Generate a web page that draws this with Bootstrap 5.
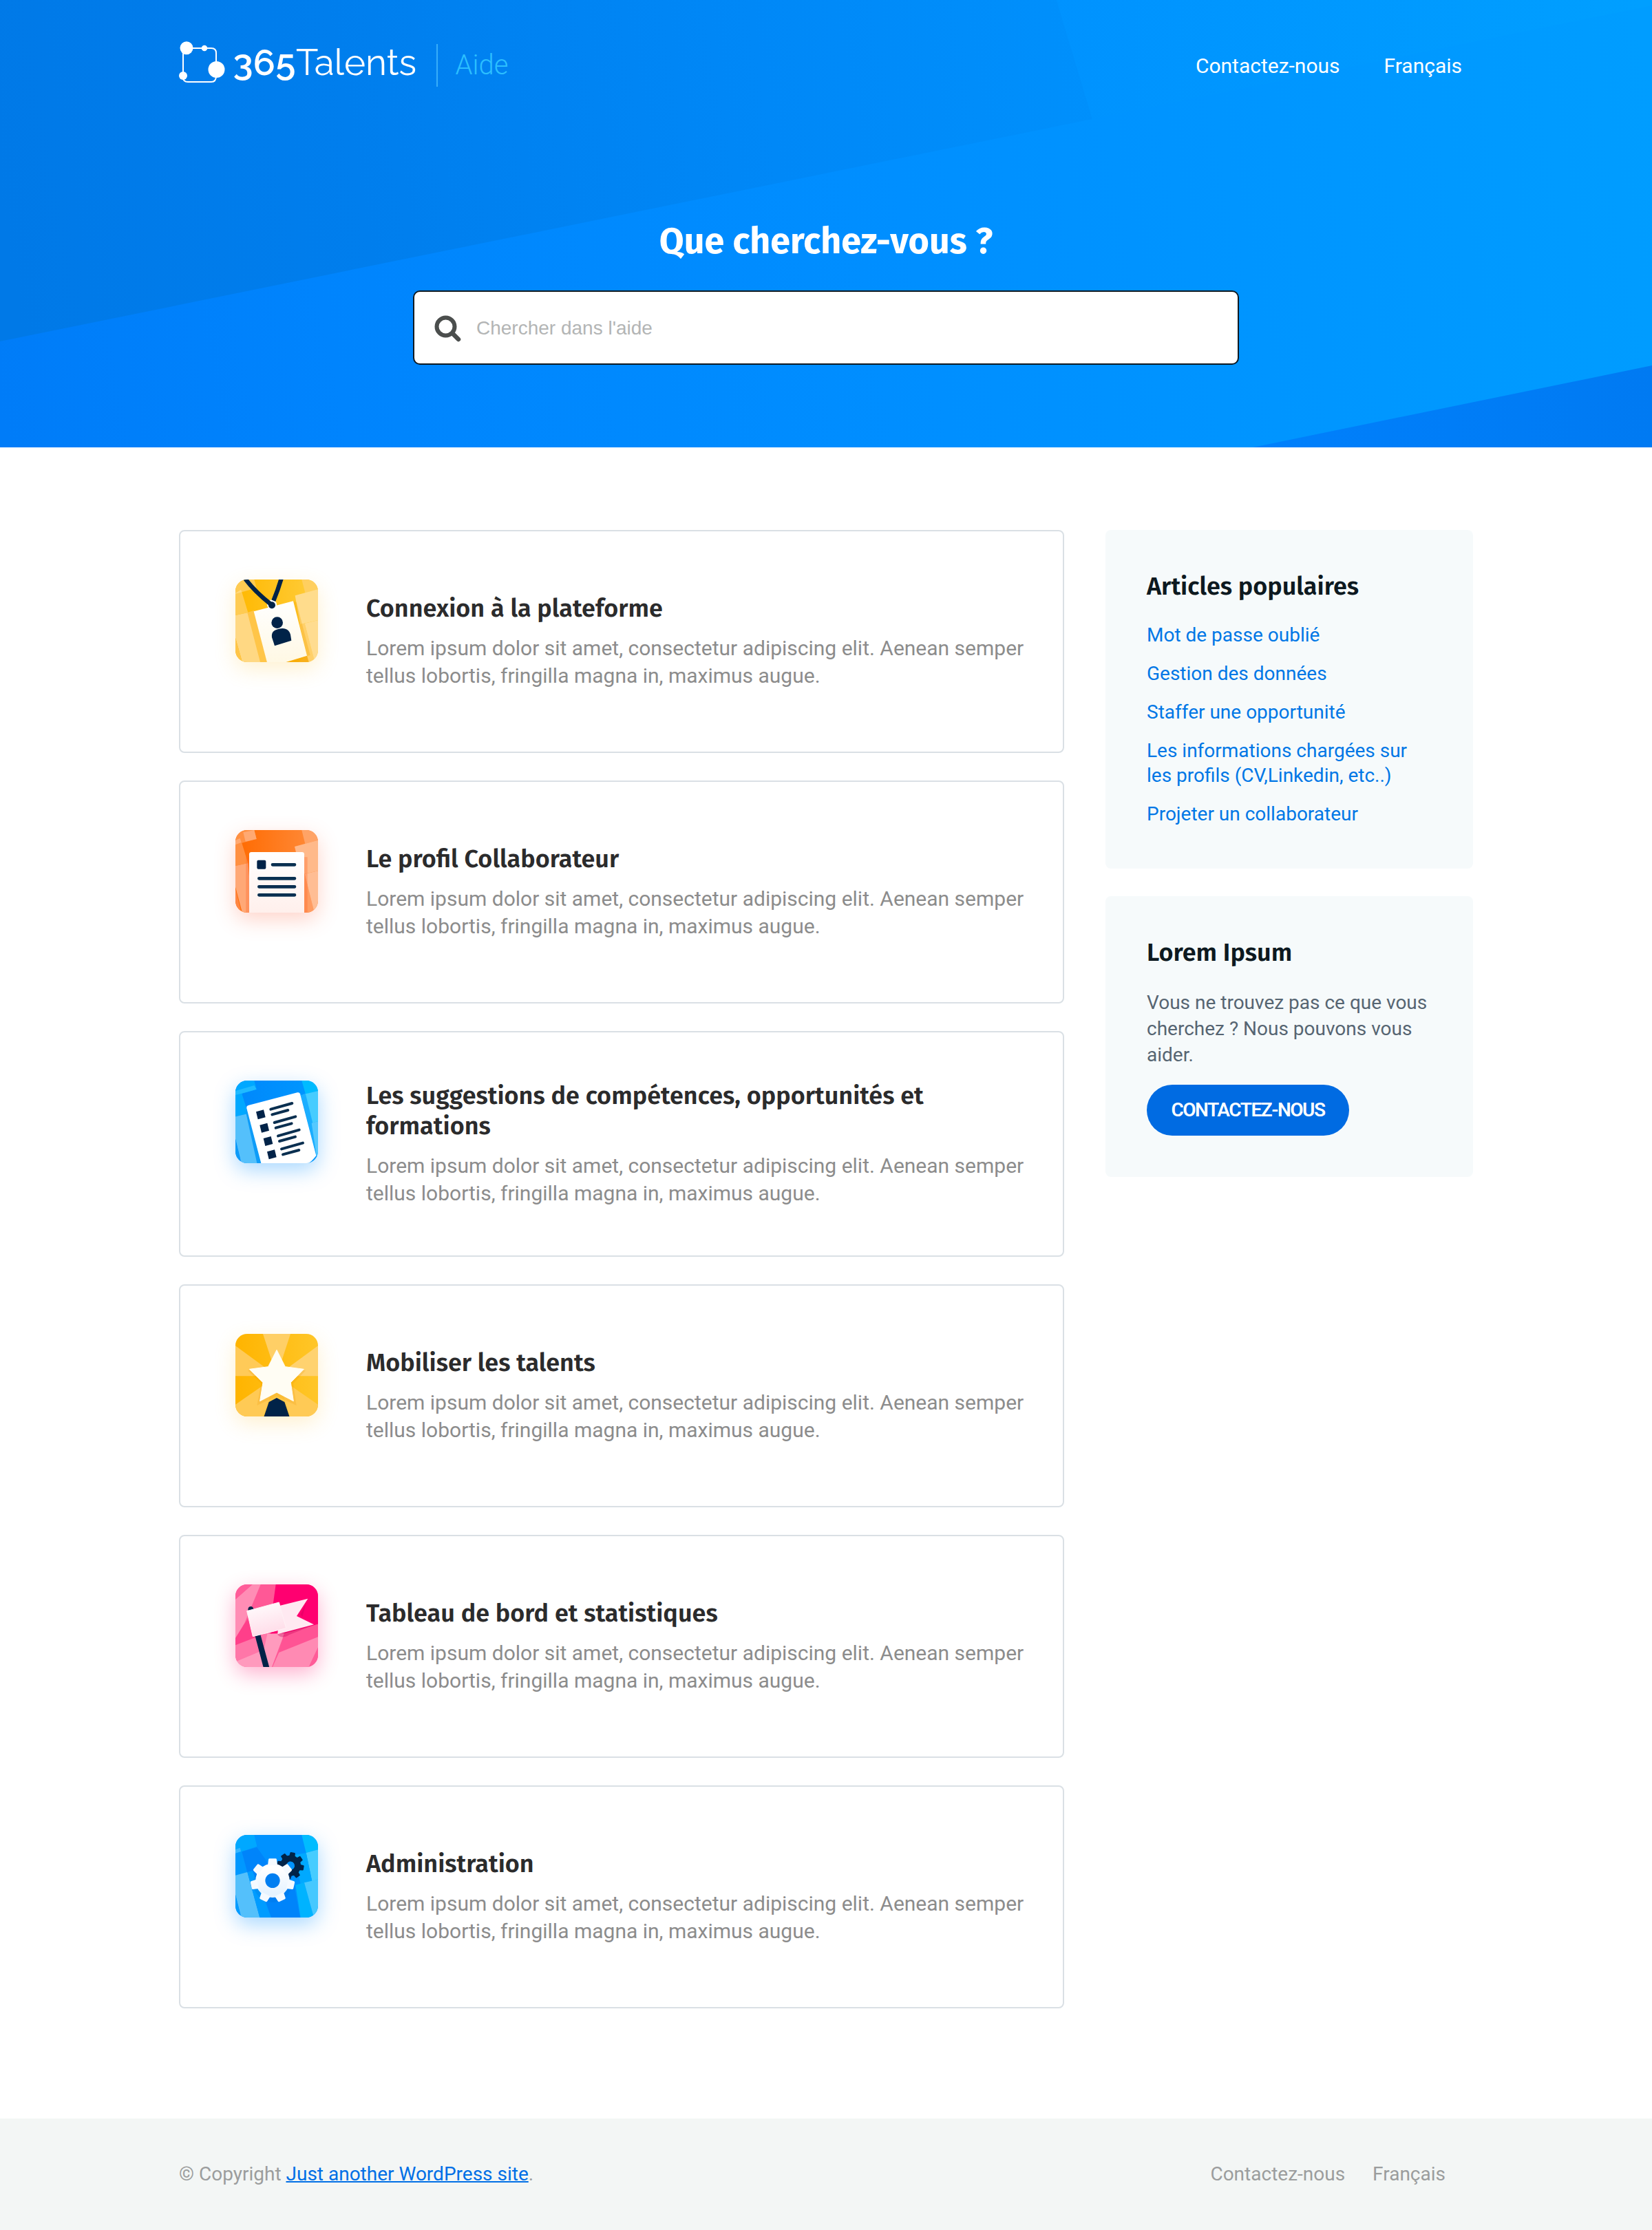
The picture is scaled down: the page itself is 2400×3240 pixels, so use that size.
<!DOCTYPE html>
<html lang="fr">
<head>
<meta charset="utf-8">
<meta name="viewport" content="width=device-width, initial-scale=1">
<title>365Talents Aide</title>
<link href="https://cdn.jsdelivr.net/npm/bootstrap@5.3.0/dist/css/bootstrap.min.css" rel="stylesheet">
<style>
body{font-family:Roboto,"Liberation Sans",sans-serif;font-size:28px;color:#566572;background:#fff}
a{text-decoration:none}
h1,h2,h3{font-family:"Fira Sans","Noto Sans",sans-serif;font-weight:600;margin:0}
.wrap{width:1880px;margin:0 auto}
.hero{height:650px;background:#0090fe}
.hero-bg{z-index:0}
.hero .wrap{z-index:1}
.topbar{height:192px}
.topbar .nav{gap:64px;padding-right:16px}
.topbar .nav a{color:#fff;font-size:30px;line-height:40px}
.hero h1{color:#fff;font-size:52px;font-weight:700;line-height:62px;margin-top:128px}
.searchbox{width:1200px;height:108px;margin:40px auto 0;border:2px solid #0f1a22;border-radius:10px;padding:2px 29px 0;gap:22px;background:#fff}
.searchbox input{border:0;outline:0;padding:0;font-family:"Liberation Sans",Arial,sans-serif;font-size:28px;color:#4b4f4f;background:transparent}
.searchbox input::placeholder{color:#b3b5b5;opacity:1}
.page-body{padding-top:120px;padding-bottom:160px;gap:60px}
.topics{width:1286px;gap:40px}
.topic{border:2px solid #dae0e5;border-radius:8px;padding:70px 40px 70px 80px;gap:70px;min-height:324px;background:#fff}
.topic-icon{width:120px;height:120px;border-radius:17px;overflow:hidden;flex:none;margin-bottom:60px}
.topic h2{font-size:36px;line-height:44px;color:#2b2b2c;margin-bottom:16px}
.topic p{font-size:30px;line-height:40px;color:#8c8c8c;margin:0}
.side{width:534px;gap:40px}
.panel{background:#f6fafb;border-radius:8px;padding:60px}
.panel h3{font-size:36px;line-height:44px;color:#0d1920}
.panel-links{gap:20px;margin:31px 0 1px}
.panel-links a{color:#0077e6;line-height:36px}
.panel p{line-height:38px;margin:32px 0 24px}
.cta{height:74px;width:294px;border-radius:37px;background:#006be2;color:#fff;font-weight:600;letter-spacing:-1.5px}
.foot{height:162px;background:#f3f6f5;color:#9b9d9d}
.foot u a{color:#006fe6}
.foot u{color:#006fe6;text-decoration-thickness:2px}
.foot .nav{gap:40px;padding-right:40px}
.foot .nav a{color:#9b9d9d}
.sh-yellow{box-shadow:0 10px 30px rgba(255,195,60,.24)}
.sh-orange{box-shadow:0 10px 30px rgba(255,90,50,.26)}
.sh-blue{box-shadow:0 10px 30px rgba(0,140,255,.34)}
.sh-pink{box-shadow:0 10px 30px rgba(255,0,100,.3)}
</style>
<script src="https://cdn.jsdelivr.net/npm/bootstrap@5.3.0/dist/js/bootstrap.bundle.min.js"></script>
</head>
<body>
<header class="hero position-relative overflow-hidden">
  <svg class="hero-bg position-absolute top-0 start-0 w-100 h-100" viewBox="0 0 2400 650" preserveAspectRatio="none" aria-hidden="true">
    <defs>
      <linearGradient id="base" gradientUnits="userSpaceOnUse" x1="0" y1="600" x2="2400" y2="120"><stop offset="0" stop-color="#007cf8"/><stop offset=".2" stop-color="#0084fd"/><stop offset=".55" stop-color="#008fff"/><stop offset="1" stop-color="#009dff"/></linearGradient>
      <linearGradient id="shade" gradientUnits="userSpaceOnUse" x1="0" y1="300" x2="1700" y2="0"><stop offset="0" stop-color="#0079e7"/><stop offset=".3" stop-color="#007eed"/><stop offset=".65" stop-color="#0088f7"/><stop offset="1" stop-color="#0092fd"/></linearGradient>
      <linearGradient id="shade2" gradientUnits="userSpaceOnUse" x1="1500" y1="0" x2="2400" y2="0"><stop offset="0" stop-color="#0092fe"/><stop offset="1" stop-color="#00a0ff"/></linearGradient>
      <linearGradient id="corner" x1="0" y1="0" x2="1" y2="0"><stop offset="0" stop-color="#0080fc"/><stop offset="1" stop-color="#007af2"/></linearGradient>
    </defs>
    <path fill="url(#base)" d="M0 0H2400V650H0z"/>
    <path fill="url(#shade)" d="M0 0H1535L1587 173L0 496z"/>
    <path fill="url(#shade2)" opacity=".7" d="M1535 0H2400V8L1587 173z"/>
    <path fill="url(#corner)" d="M1820 650L2400 531V650z"/>
  </svg>
  <div class="wrap position-relative">
    <div class="topbar d-flex align-items-center justify-content-between">
      <a href="#" class="d-block" aria-label="365Talents Aide">
        <svg class="d-block" width="490" height="100" viewBox="260 46 490 100">
          <g fill="none" stroke="#fff" stroke-width="2"><path d="M266 70V112Q266 119 273 119H307Q314 119 314 110V77Q314 70 307 70H270"/></g>
          <g fill="#fff"><circle cx="271" cy="69.700" r="9.500"/><circle cx="297" cy="70" r="4.300"/><circle cx="314.500" cy="101" r="12"/><circle cx="266" cy="110" r="6"/>
          <text x="338.500" y="109" font-family="Raleway, Lato, sans-serif" font-size="53" font-weight="600" textLength="91">365</text>
          <text x="430" y="109" font-family="Raleway, Lato, sans-serif" font-size="53" font-weight="400" textLength="175">Talents</text></g>
          <path stroke="#38aefa" stroke-width="2" d="M635 64V126"/>
          <text x="661.500" y="108" font-family="Roboto, sans-serif" font-size="40" font-weight="300" fill="#2cbfff" textLength="77">Aide</text>
        </svg>
      </a>
      <nav class="nav"><a href="#">Contactez-nous</a><a href="#">Français</a></nav>
    </div>
    <h1 class="text-center">Que cherchez-vous ?</h1>
    <form class="searchbox d-flex align-items-center">
      <svg width="39" height="39" viewBox="0 0 39 39" fill="none" stroke="#4b4e4d"><circle cx="16.500" cy="16.500" r="13" stroke-width="6"/><path d="M26.500 26.500L35 35" stroke-width="6.500" stroke-linecap="round"/></svg>
      <input class="flex-grow-1" type="text" placeholder="Chercher dans l'aide">
    </form>
  </div>
</header>

<main class="wrap page-body d-flex align-items-start">
  <div class="topics d-flex flex-column">
    <a href="#" class="topic d-flex align-items-center">
      <svg class="topic-icon align-self-start sh-yellow" viewBox="66 66 360 360">
        <defs><linearGradient id="y1" x1="0" y1="0" x2="1" y2="0"><stop offset="0" stop-color="#ffb800"/><stop offset="1" stop-color="#ffcd3c"/></linearGradient><linearGradient id="paper" x1="0" y1="0" x2="0" y2="1"><stop offset="0" stop-color="#fff"/><stop offset="1" stop-color="#fff8e4"/></linearGradient></defs>
        <path fill="url(#y1)" d="M66 66H426V426H66z"/>
        <path fill="#ffcb52" d="M66 66H148L158 103L94 121L121 210L66 222z"/><path fill="#ffd980" d="M66 126L90 110L94 121L66 128z"/>
        <path fill="#ffd883" d="M66 222L121 210L180 426H96L66 320z"/><path fill="#ffc548" d="M66 320L96 426H66zM118 210L148 200L204 426H174z"/>
        <path fill="#ffcf5f" d="M355 66H426V108L370 124z"/><path fill="#ffdc8c" d="M326 136L426 108V243L348 262z"/><path fill="#ffd06a" d="M345 262L368 257L412 426H340L378 398z"/><path fill="#ffdc90" d="M368 257L426 243V426H412z"/>
        <path fill="#f5a400" d="M280 426L378 398L386 426z" opacity=".75"/><path fill="#f7a800" opacity=".35" d="M316 160L332 165L392 396L378 400z"/>
        <path fill="url(#paper)" d="M146 205L318 160L378 398L280 428H204z"/>
        <circle cx="225" cy="175" r="21" fill="#fff"/>
        <path fill="none" stroke="#012348" stroke-width="19" d="M108 62Q150 118 218 172M266 62Q252 110 232 158"/><circle cx="225" cy="178" r="15" fill="#012348"/>
        <circle cx="248" cy="254" r="25" fill="#012348"/><path fill="#012348" d="M237 355L225 318C222 294 235 286 255 281C285 274 300 285 306 306L310 332z"/>
      </svg>
      <div><h2>Connexion à la plateforme</h2><p>Lorem ipsum dolor sit amet, consectetur adipiscing elit. Aenean semper tellus lobortis, fringilla magna in, maximus augue.</p></div>
    </a>
    <a href="#" class="topic d-flex align-items-center">
      <svg class="topic-icon align-self-start sh-orange" viewBox="66 62 360 360">
        <defs><linearGradient id="o1" x1="0" y1="0" x2="1" y2="0"><stop offset="0" stop-color="#ff6a00"/><stop offset="1" stop-color="#ff8c3c"/></linearGradient><linearGradient id="op" x1="0" y1="0" x2="0" y2="1"><stop offset="0" stop-color="#fff"/><stop offset="1" stop-color="#ffeeea"/></linearGradient></defs>
        <path fill="url(#o1)" d="M66 62H426V422H66z"/>
        <path fill="#ff9042" d="M66 62H148L158 101L94 118L121 206L66 218z"/><path fill="#ffa972" d="M66 106L86 98L92 116L66 126zM100 72L148 62L158 101L110 112z"/>
        <path fill="#ffa876" d="M66 218L121 206L140 422H96L66 310z"/><path fill="#ff8743" d="M66 318L92 422H66z"/>
        <path fill="#ffa366" d="M355 62H426V106L370 122z"/><path fill="#ffb98a" d="M324 134L426 106V240L354 256z"/><path fill="#ff9c62" d="M354 256L368 253L410 422H354z"/><path fill="#ffbd94" d="M368 253L426 240V422H410z"/>
        <path fill="#ff5f20" opacity=".3" d="M112 180H380V422H112z"/>
        <rect x="126" y="158" width="240" height="290" rx="10" fill="url(#op)"/>
        <rect x="160" y="193" width="39" height="39" rx="6" fill="#012348"/>
        <path stroke="#0a2f50" stroke-width="14" stroke-linecap="round" d="M228 213H324M169 273H324M169 309H324M169 345H324"/>
      </svg>
      <div><h2>Le profil Collaborateur</h2><p>Lorem ipsum dolor sit amet, consectetur adipiscing elit. Aenean semper tellus lobortis, fringilla magna in, maximus augue.</p></div>
    </a>
    <a href="#" class="topic d-flex align-items-center">
      <svg class="topic-icon align-self-start sh-blue" viewBox="66 59 360 360">
        <defs><linearGradient id="b1" x1="0" y1="0" x2="1" y2="0"><stop offset="0" stop-color="#0087fb"/><stop offset="1" stop-color="#0098ff"/></linearGradient></defs>
        <path fill="url(#b1)" d="M66 59H426V419H66z"/>
        <path fill="#00a8ff" d="M66 59H148L158 97L94 115L121 203L66 216z"/><path fill="#1fbaff" d="M66 104L148 80L158 97L94 115L66 122z"/>
        <path fill="#54c0fb" d="M66 216L121 203L178 419H92L66 312z"/><path fill="#0e9cf8" d="M66 316L90 419H66zM110 190L125 184L182 419H160z"/>
        <path fill="#00bbff" d="M355 59H426V104L372 118z"/><path fill="#46ccff" d="M360 120L426 104V236L396 246z"/><path fill="#1baeff" d="M350 122L372 118L412 280L420 390z"/><path fill="#55c9ff" d="M398 244L426 236V400L420 390z"/>
        <path fill="#fff" d="M122 167L336 111Q345 109 348 117L418 386Q400 410 385 419H178L115 180Q113 170 122 167z"/>
        <g fill="#012348"><path d="M156 195L189 186L197 219L164 228zM172 253L205 244L213 277L180 286zM188 311L221 302L229 335L196 344zM204 369L237 360L245 393L212 402z"/></g>
        <path stroke="#0a2f50" stroke-width="12" stroke-linecap="round" d="M220 184L313 158M226 207L295 188M236 242L328 216M242 265L311 246M252 300L344 274M258 323L327 304M267 357L360 331M273 381L343 362"/>
      </svg>
      <div><h2>Les suggestions de compétences, opportunités et formations</h2><p>Lorem ipsum dolor sit amet, consectetur adipiscing elit. Aenean semper tellus lobortis, fringilla magna in, maximus augue.</p></div>
    </a>
    <a href="#" class="topic d-flex align-items-center">
      <svg class="topic-icon align-self-start sh-yellow" viewBox="66 68 360 360">
        <defs><linearGradient id="s1" x1="0" y1="0" x2="1" y2="0"><stop offset="0" stop-color="#ffb400"/><stop offset="1" stop-color="#ffc628"/></linearGradient></defs>
        <path fill="url(#s1)" d="M66 68H426V428H66z"/>
        <path fill="#ffcf66" d="M246 252L186 68H306z"/><path fill="#ffd26f" d="M246 252L426 120V252z"/><path fill="#ffca58" d="M246 252L66 120V252z"/>
        <path fill="#ffca55" d="M246 252L66 376V428H190zM246 252L426 376V428H302z"/><path fill="#ffc743" d="M190 428L246 252L302 428z"/>
        <path fill="#e99400" opacity=".2" d="M246 155L290 218L372 228L318 285L332 380L246 340L160 380L178 285L120 228L205 218z"/>
        <path fill="#012348" d="M190 430L212 365L246 347L280 365L302 430z"/>
        <path fill="#fffdf4" stroke="#fffdf4" stroke-width="3" stroke-linejoin="round" d="M246 138L283 211L364 222L307 280L319 361L246 323L173 361L186 280L127 222L209 211z"/>
      </svg>
      <div><h2>Mobiliser les talents</h2><p>Lorem ipsum dolor sit amet, consectetur adipiscing elit. Aenean semper tellus lobortis, fringilla magna in, maximus augue.</p></div>
    </a>
    <a href="#" class="topic d-flex align-items-center">
      <svg class="topic-icon align-self-start sh-pink" viewBox="66 65 360 360">
        <defs><linearGradient id="f1" x1="0" y1="0" x2=".3" y2="1"><stop offset="0" stop-color="#fff"/><stop offset="1" stop-color="#ffdde9"/></linearGradient></defs>
        <path fill="#ff5896" d="M66 65H426V425H66z"/>
        <path fill="#ff8db5" d="M140 65H176L104 238L66 300V130z"/><path fill="#ff5c99" d="M66 65H140L66 130z"/><path fill="#ff3f8a" d="M66 325V300L104 238L150 180L200 290L66 340z"/>
        <path fill="#ff0070" d="M242 65H426V238L225 310L215 260z"/>
        <path fill="#ff76a8" d="M66 330L210 274L190 350L66 402z"/><path fill="#ff9abd" d="M66 402L190 350L205 280L280 278L225 425H66z"/>
        <path fill="#ff5394" d="M280 278L426 238V294L256 362z"/><path fill="#ff8ab3" d="M256 362L426 294V340L386 425H228z"/><path fill="#ff5c98" d="M426 340V425H386z"/>
        <path fill="#c80058" opacity=".35" d="M250 280L400 245L300 285Q270 305 250 285zM350 196L376 140L358 206z"/>
        <path fill="#012348" d="M121 174Q122 161 134 161Q142 161 145 172L214 427H188z"/>
        <path fill="#ffe9f1" d="M258 158L382 127L333 203L408 240L250 282z"/>
        <path fill="url(#f1)" stroke="#fff2f6" stroke-width="3" stroke-linejoin="round" d="M116 181L256 143L287 256L142 292z"/>
      </svg>
      <div><h2>Tableau de bord et statistiques</h2><p>Lorem ipsum dolor sit amet, consectetur adipiscing elit. Aenean semper tellus lobortis, fringilla magna in, maximus augue.</p></div>
    </a>
    <a href="#" class="topic d-flex align-items-center">
      <svg class="topic-icon align-self-start sh-blue" viewBox="66 62 360 360">
        <defs>
          <linearGradient id="g1" x1="0" y1="0" x2="0" y2="1"><stop offset="0" stop-color="#fff"/><stop offset="1" stop-color="#e6f3ff"/></linearGradient>
          <path id="tooth" d="M-21 -66L-18 -92Q-17 -96 -13 -96H13Q17 -96 18 -92L21 -66z"/>
        </defs>
        <path fill="#0092ff" d="M66 62H426V422H66z"/>
        <path fill="#00a8ff" d="M66 62H148L160 112L94 135L66 142z"/><path fill="#0098ff" d="M66 142L94 135L116 225L66 238z"/><path fill="#38b6ff" d="M66 126L86 118L90 134L66 142z"/>
        <path fill="#0084fa" d="M94 135L160 116L240 230L320 270L348 422H222L180 300L118 224z"/>
        <path fill="#54c0fb" d="M66 238L118 224L172 422H92L66 322z"/><path fill="#009cff" d="M66 322L90 422H66zM118 224L140 218L222 422H172z"/>
        <path fill="#00bcff" d="M355 62H426V126L374 140z"/><path fill="#46ccff" d="M374 140L426 126V256L400 264z"/><path fill="#00a9ff" d="M322 150L374 140L400 264L350 276z"/><path fill="#00b3ff" d="M328 280L366 270L408 422H350z"/><path fill="#46c8ff" d="M366 270L426 256V422H408z"/>
        <g transform="translate(306 196) rotate(10) scale(.61)"><g fill="#012348"><use href="#tooth"/><use href="#tooth" transform="rotate(45)"/><use href="#tooth" transform="rotate(90)"/><use href="#tooth" transform="rotate(135)"/><use href="#tooth" transform="rotate(180)"/><use href="#tooth" transform="rotate(270)"/><use href="#tooth" transform="rotate(315)"/></g><circle r="52" fill="none" stroke="#012348" stroke-width="44"/></g>
        <circle cx="228" cy="272" r="84" fill="#0064c8" opacity=".18"/>
        <g transform="translate(228 261)"><circle r="53" fill="none" stroke="url(#g1)" stroke-width="42"/><g fill="#f5faff"><use href="#tooth"/><use href="#tooth" transform="rotate(51.430)"/><use href="#tooth" transform="rotate(102.860)"/><use href="#tooth" transform="rotate(154.290)"/><use href="#tooth" transform="rotate(205.710)"/><use href="#tooth" transform="rotate(257.140)"/><use href="#tooth" transform="rotate(308.570)"/></g></g>
      </svg>
      <div><h2>Administration</h2><p>Lorem ipsum dolor sit amet, consectetur adipiscing elit. Aenean semper tellus lobortis, fringilla magna in, maximus augue.</p></div>
    </a>
  </div>

  <aside class="side d-flex flex-column">
    <section class="panel">
      <h3>Articles populaires</h3>
      <div class="panel-links d-flex flex-column">
        <a href="#">Mot de passe oublié</a>
        <a href="#">Gestion des données</a>
        <a href="#">Staffer une opportunité</a>
        <a href="#">Les informations chargées sur les profils (CV,Linkedin, etc..)</a>
        <a href="#">Projeter un collaborateur</a>
      </div>
    </section>
    <section class="panel">
      <h3>Lorem Ipsum</h3>
      <p>Vous ne trouvez pas ce que vous cherchez ? Nous pouvons vous aider.</p>
      <a href="#" class="cta d-flex align-items-center justify-content-center">CONTACTEZ-NOUS</a>
    </section>
  </aside>
</main>

<footer class="foot d-flex">
  <div class="wrap d-flex align-items-center justify-content-between">
    <div>© Copyright <u><a href="#">Just another WordPress site</a></u>.</div>
    <nav class="nav"><a href="#">Contactez-nous</a><a href="#">Français</a></nav>
  </div>
</footer>
</body>
</html>
